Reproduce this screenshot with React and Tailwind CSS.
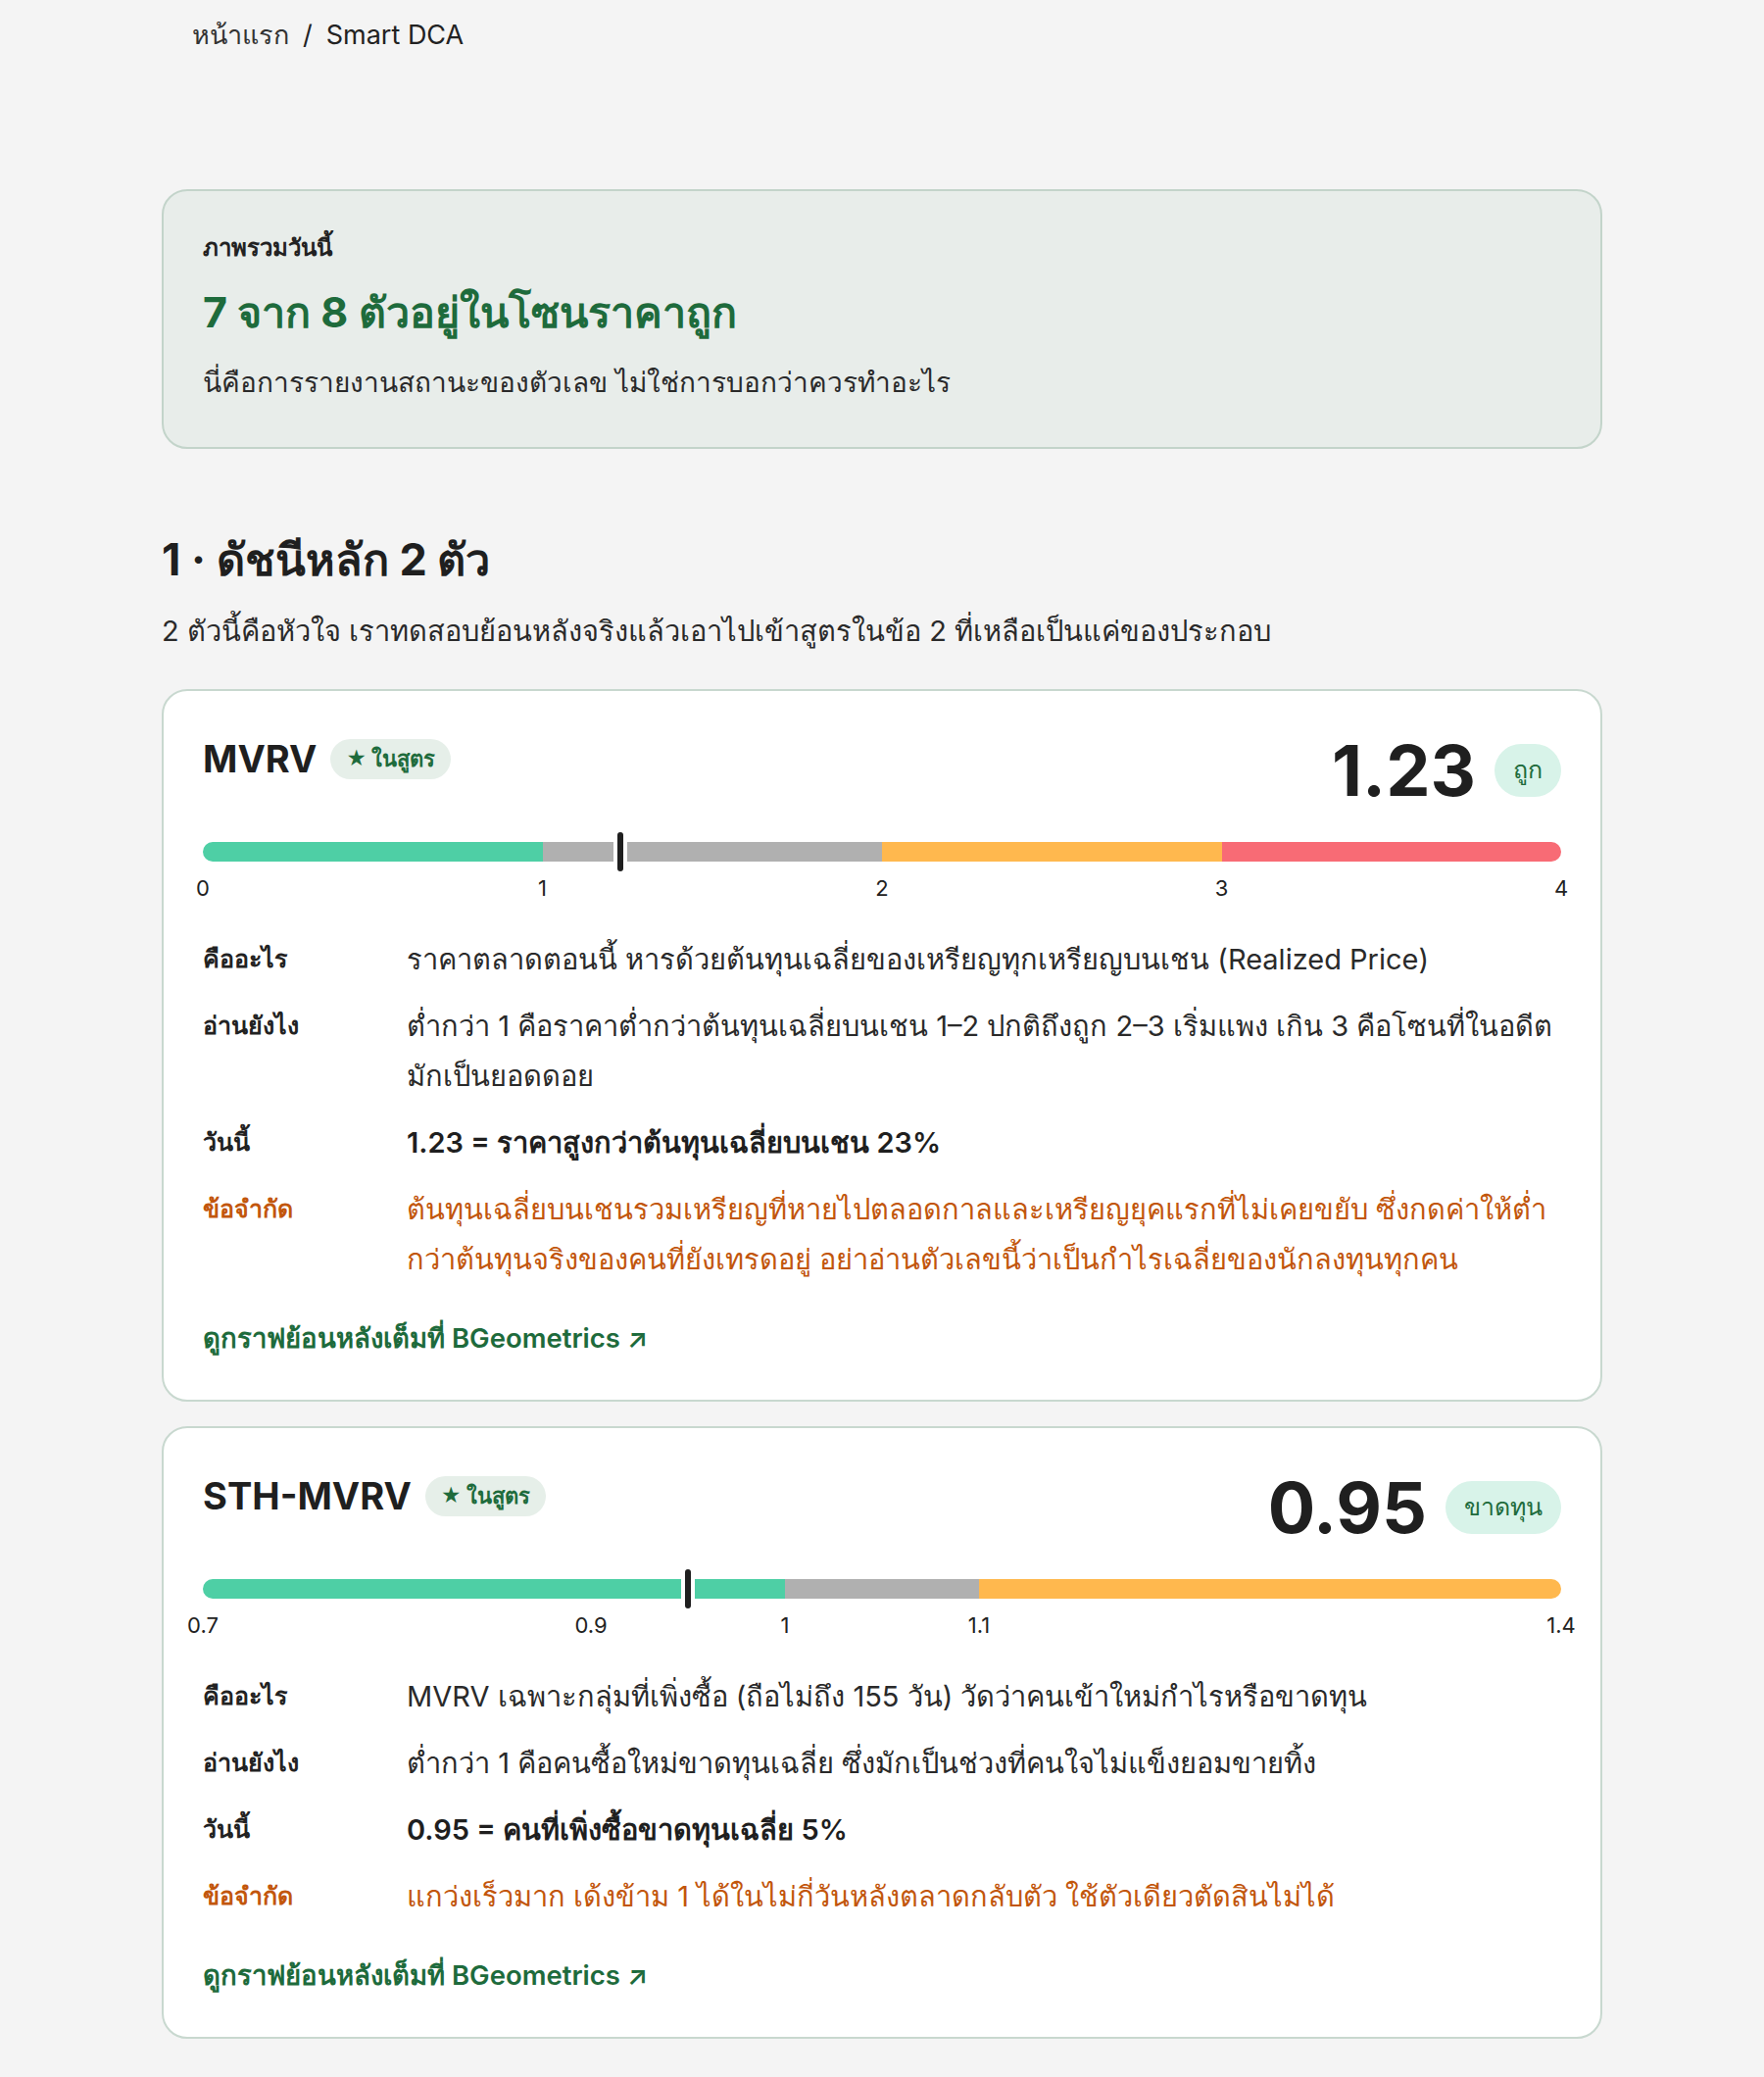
const GREEN = "#4ecfa5";
const GRAY = "#b0b0b0";
const ORANGE = "#ffb84e";
const RED = "#f86b75";

const indicators = [
  {
    name: "MVRV",
    value: "1.23",
    raw: 1.23,
    status: "ถูก",
    min: 0,
    max: 4,
    segments: [
      { to: 1, color: GREEN },
      { to: 2, color: GRAY },
      { to: 3, color: ORANGE },
      { to: 4, color: RED },
    ],
    ticks: [
      { v: 0, label: "0" },
      { v: 1, label: "1" },
      { v: 2, label: "2" },
      { v: 3, label: "3" },
      { v: 4, label: "4" },
    ],
    what: "ราคาตลาดตอนนี้ หารด้วยต้นทุนเฉลี่ยของเหรียญทุกเหรียญบนเชน (Realized Price)",
    read: "ต่ำกว่า 1 คือราคาต่ำกว่าต้นทุนเฉลี่ยบนเชน 1–2 ปกติถึงถูก 2–3 เริ่มแพง เกิน 3 คือโซนที่ในอดีตมักเป็นยอดดอย",
    today: "1.23 = ราคาสูงกว่าต้นทุนเฉลี่ยบนเชน 23%",
    limit:
      "ต้นทุนเฉลี่ยบนเชนรวมเหรียญที่หายไปตลอดกาลและเหรียญยุคแรกที่ไม่เคยขยับ ซึ่งกดค่าให้ต่ำกว่าต้นทุนจริงของคนที่ยังเทรดอยู่ อย่าอ่านตัวเลขนี้ว่าเป็นกำไรเฉลี่ยของนักลงทุนทุกคน",
  },
  {
    name: "STH-MVRV",
    value: "0.95",
    raw: 0.95,
    status: "ขาดทุน",
    min: 0.7,
    max: 1.4,
    segments: [
      { to: 1, color: GREEN },
      { to: 1.1, color: GRAY },
      { to: 1.4, color: ORANGE },
    ],
    ticks: [
      { v: 0.7, label: "0.7" },
      { v: 0.9, label: "0.9" },
      { v: 1, label: "1" },
      { v: 1.1, label: "1.1" },
      { v: 1.4, label: "1.4" },
    ],
    what: "MVRV เฉพาะกลุ่มที่เพิ่งซื้อ (ถือไม่ถึง 155 วัน) วัดว่าคนเข้าใหม่กำไรหรือขาดทุน",
    read: "ต่ำกว่า 1 คือคนซื้อใหม่ขาดทุนเฉลี่ย ซึ่งมักเป็นช่วงที่คนใจไม่แข็งยอมขายทิ้ง",
    today: "0.95 = คนที่เพิ่งซื้อขาดทุนเฉลี่ย 5%",
    limit: "แกว่งเร็วมาก เด้งข้าม 1 ได้ในไม่กี่วันหลังตลาดกลับตัว ใช้ตัวเดียวตัดสินไม่ได้",
  },
];

function pct(v, min, max) {
  return ((v - min) / (max - min)) * 100;
}

function Gauge({ item }) {
  let prev = item.min;
  return (
    <div className="mt-[35px]">
      <div className="relative h-[20px]">
        <div className="flex h-full w-full rounded-full overflow-hidden">
          {item.segments.map((s, i) => {
            const w = ((s.to - prev) / (item.max - item.min)) * 100;
            prev = s.to;
            return <div key={i} style={{ width: `${w}%`, background: s.color }} />;
          })}
        </div>
        <div
          className="absolute top-[-14px] w-[14px] h-[48px] -translate-x-1/2 bg-white rounded-full flex items-center justify-center"
          style={{ left: `${pct(item.raw, item.min, item.max)}%` }}
        >
          <div className="w-[6px] h-[40px] rounded-full bg-[#1f1f1f]" />
        </div>
      </div>
      <div className="relative h-[30px] mt-[12px]">
        {item.ticks.map((t) => (
          <span
            key={t.label}
            className="absolute top-0 -translate-x-1/2 text-[22px] leading-[30px] text-[#222]"
            style={{ left: `${pct(t.v, item.min, item.max)}%` }}
          >
            {t.label}
          </span>
        ))}
      </div>
    </div>
  );
}

function Row({ label, children, tone = "normal" }) {
  const labelCls = tone === "limit" ? "text-[#c2560c]" : "text-[#222]";
  const textCls =
    tone === "limit"
      ? "text-[#c2560c]"
      : tone === "today"
        ? "text-[#1f1f1f] font-semibold"
        : "text-[#2a2a2a]";
  return (
    <div className="flex">
      <div className={`w-[208px] shrink-0 text-[25px] leading-[51px] font-bold ${labelCls}`}>{label}</div>
      <div className={`flex-1 text-[29px] leading-[51px] ${textCls}`}>{children}</div>
    </div>
  );
}

function IndicatorCard({ item }) {
  return (
    <div className="bg-white border-2 border-[#c8d8cf] rounded-[26px] px-[40px] pt-[43px] pb-[43px]">
      <div className="flex items-start justify-between">
        <div className="flex items-center gap-[14px] h-[52px]">
          <h3 className="text-[38px] leading-[52px] font-bold text-[#1f1f1f]">{item.name}</h3>
          <span className="h-[41px] px-[16px] rounded-full bg-[#e6efe9] text-[#1e6b3c] text-[22px] font-semibold flex items-center gap-[5px]">
            <span className="text-[20px]">★</span>
            ในสูตร
          </span>
        </div>
        <div className="flex items-center gap-[19px] h-[76px]">
          <span className="text-[72px] leading-[76px] font-bold text-[#1f1f1f]">{item.value}</span>
          <span className="h-[54px] px-[19px] rounded-full bg-[#d8f3e9] text-[#1e6b3c] text-[25px] font-medium flex items-center">
            {item.status}
          </span>
        </div>
      </div>

      <Gauge item={item} />

      <div className="mt-[32px] flex flex-col gap-[17px]">
        <Row label="คืออะไร">{item.what}</Row>
        <Row label="อ่านยังไง">{item.read}</Row>
        <Row label="วันนี้" tone="today">{item.today}</Row>
        <Row label="ข้อจำกัด" tone="limit">{item.limit}</Row>
      </div>

      <a className="block mt-[35px] text-[27.5px] leading-[40px] font-semibold text-[#1e6b3c]">
        ดูกราฟย้อนหลังเต็มที่ BGeometrics ↗
      </a>
    </div>
  );
}

export default function App() {
  return (
    <div
      className="min-h-screen bg-[#f4f4f4] text-[#1f1f1f]"
      style={{ fontFamily: 'Inter, "Noto Sans", "DejaVu Sans", sans-serif' }}
    >
      <div className="w-[1470px] mx-auto pt-[18px] pb-[41px]">
        <nav className="pl-[31px] text-[27px] leading-[36px] text-[#222] flex items-center gap-[14px]">
          <span className="text-[#333]">หน้าแรก</span>
          <span>/</span>
          <span>Smart DCA</span>
        </nav>

        <section className="mt-[139px] bg-[#e8edea] border-2 border-[#c3d4ca] rounded-[26px] px-[40px] py-[40px] flex flex-col gap-[17px]">
          <p className="text-[24px] leading-[36px] font-bold text-[#222]">ภาพรวมวันนี้</p>
          <h1 className="text-[43px] leading-[60px] font-bold text-[#1e6b3c]">7 จาก 8 ตัวอยู่ในโซนราคาถูก</h1>
          <p className="text-[28px] leading-[51px] text-[#2a2a2a]">นี่คือการรายงานสถานะของตัวเลข ไม่ใช่การบอกว่าควรทำอะไร</p>
        </section>

        <h2 className="mt-[83px] text-[45px] leading-[60px] font-bold text-[#1f1f1f]">1 · ดัชนีหลัก 2 ตัว</h2>
        <p className="mt-[17px] text-[29px] leading-[51px] text-[#2a2a2a]">
          2 ตัวนี้คือหัวใจ เราทดสอบย้อนหลังจริงแล้วเอาไปเข้าสูตรในข้อ 2 ที่เหลือเป็นแค่ของประกอบ
        </p>

        <div className="mt-[34px] flex flex-col gap-[25px]">
          {indicators.map((it) => (
            <IndicatorCard key={it.name} item={it} />
          ))}
        </div>
      </div>
    </div>
  );
}
